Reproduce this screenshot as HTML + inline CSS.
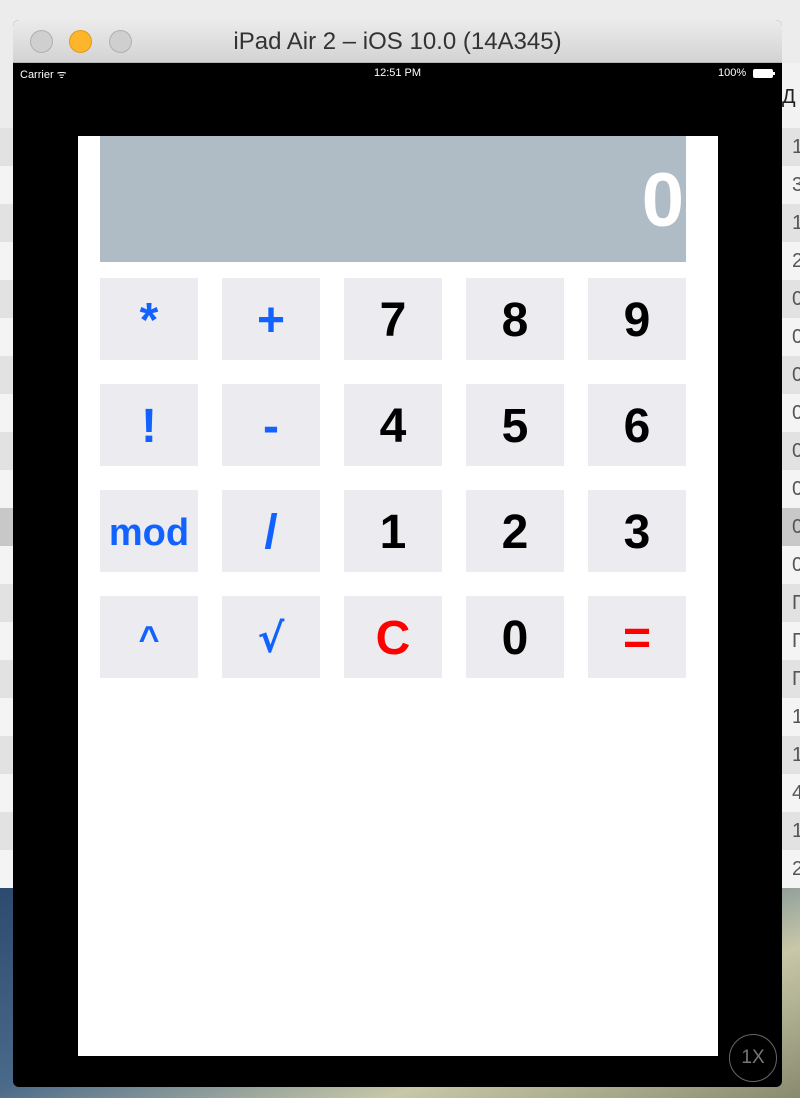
<!DOCTYPE html>
<html><head><meta charset="utf-8"><style>
*{margin:0;padding:0;box-sizing:border-box}
body{width:800px;height:1098px;overflow:hidden;position:relative;background:#ececec;font-family:"Liberation Sans",sans-serif}
.abs{position:absolute}
.row{position:absolute;height:38px;font-size:20px;color:#555;line-height:38px}
.win{left:13px;top:20px;width:769px;height:1067px;border-radius:6px;background:#000;overflow:hidden}
.tb{position:absolute;left:0;top:0;width:769px;height:43px;background:linear-gradient(#ebebeb,#d3d3d3);border-bottom:1px solid #b5b5b5}
.dot{position:absolute;top:10px;width:23px;height:23px;border-radius:50%;background:#cfcfcf;border:1px solid #b0b0b0}
.btn{position:absolute;width:98px;height:82px;background:#ebebf0;font-weight:bold;font-size:48px;text-align:center;line-height:86px}
.b{color:#1162ff}.k{color:#000}.r{color:#f00}
</style></head><body>
<div class="abs" style="left:0;top:887px;width:800px;height:211px;background:linear-gradient(160deg,#2c4a6e,#4a6a8a 40%,#c8c8a8 70%,#8a8a70)"></div>
<div class="abs" style="left:782px;top:63px;width:18px;height:824px;background:#f2f2f2"></div>
<div class="abs" style="left:782px;top:86px;font-size:20px;color:#222">Д</div>
<div id="rows"></div>
<script>
var t=['1','3','1','2','0','0','0','0','0','0','0','0','П','П','П','1','1','4','1','2'];
var h='';for(var i=0;i<20;i++){var y=128+i*38;h+='<div class="row" style="left:782px;top:'+y+'px;width:18px;background:'+(i%2?'#f4f4f4':'#e2e2e2')+(i==10?';background:#c8c8c8':'')+';padding-left:10px">'+t[i]+'</div>';h+='<div class="row" style="left:0;top:'+y+'px;width:13px;background:'+(i%2?'#f4f4f4':'#e2e2e2')+(i==10?';background:#c8c8c8':'')+'"></div>';}
document.getElementById('rows').innerHTML=h;
</script>
<div class="abs win">
<div class="tb">
<div class="dot" style="left:17px"></div>
<div class="dot" style="left:56px;background:#fdb62b;border-color:#de9a1c"></div>
<div class="dot" style="left:96px"></div>
<div style="position:absolute;left:0;width:769px;top:8px;text-align:center;font-size:24px;color:#333">iPad Air 2 – iOS 10.0 (14A345)</div>
</div>
<div style="position:absolute;left:7px;top:47px;font-size:11px;color:#fff">Carrier ᯤ</div>
<div style="position:absolute;left:0;width:769px;top:47px;text-align:center;font-size:11px;color:#fff">12:51 PM</div>
<div style="position:absolute;left:705px;top:47px;font-size:11px;color:#fff">100%</div>
<div style="position:absolute;left:740px;top:49px;width:20px;height:9px;background:#fff;border-radius:2px"></div>
<div style="position:absolute;left:760px;top:52px;width:2px;height:3px;background:#fff"></div>
<div style="position:absolute;left:716px;top:1014px;width:48px;height:48px;border-radius:50%;border:1px solid #666;color:#777;font-size:19px;text-align:center;line-height:46px">1X</div>
</div>
<div class="abs" style="left:78px;top:136px;width:640px;height:920px;background:#fff"></div>
<div class="abs" style="left:100px;top:136px;width:586px;height:126px;background:#b0bcc5;color:#fff;font-weight:bold;font-size:76px;text-align:right;line-height:130px;padding-right:2px">0</div>
<div class="btn b" style="left:100px;top:278px">*</div>
<div class="btn b" style="left:222px;top:278px">+</div>
<div class="btn k" style="left:344px;top:278px">7</div>
<div class="btn k" style="left:466px;top:278px">8</div>
<div class="btn k" style="left:588px;top:278px">9</div>
<div class="btn b" style="left:100px;top:384px">!</div>
<div class="btn b" style="left:222px;top:384px">-</div>
<div class="btn k" style="left:344px;top:384px">4</div>
<div class="btn k" style="left:466px;top:384px">5</div>
<div class="btn k" style="left:588px;top:384px">6</div>
<div class="btn b" style="left:100px;top:490px;font-size:38px">mod</div>
<div class="btn b" style="left:222px;top:490px">/</div>
<div class="btn k" style="left:344px;top:490px">1</div>
<div class="btn k" style="left:466px;top:490px">2</div>
<div class="btn k" style="left:588px;top:490px">3</div>
<div class="btn b" style="left:100px;top:596px;font-size:36px">^</div>
<div class="btn b" style="left:222px;top:596px;font-family:'DejaVu Sans',sans-serif;font-size:40px">√</div>
<div class="btn r" style="left:344px;top:596px">C</div>
<div class="btn k" style="left:466px;top:596px">0</div>
<div class="btn r" style="left:588px;top:596px">=</div>
</body></html>
